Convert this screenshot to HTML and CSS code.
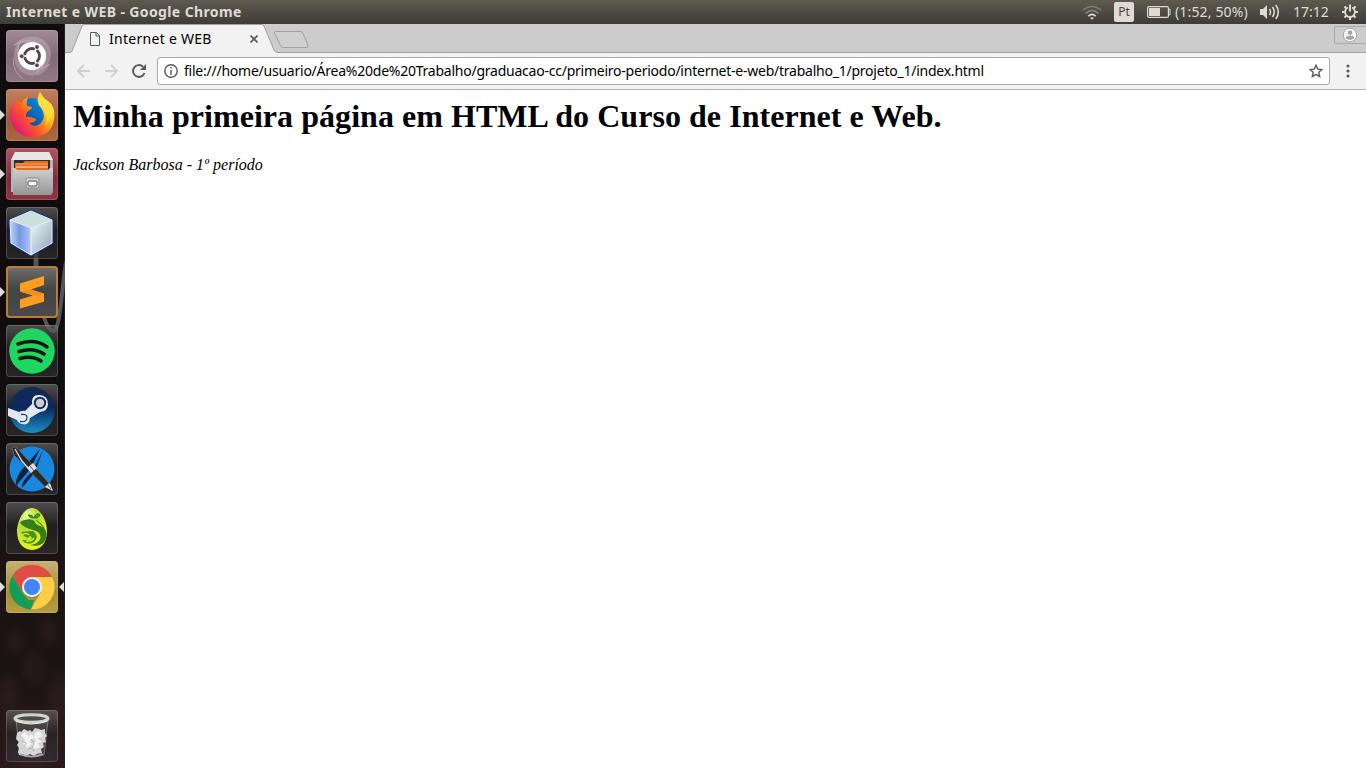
FILE: index.html
```html
<!DOCTYPE html>
<html lang="pt">
<head>
<meta charset="utf-8">
<title>Internet e WEB</title>
<link rel="stylesheet" href="styles.css">
</head>
<body>
<header class="panel">
  <div class="panel-title"><span class="t-title">Internet e WEB - Google Chrome</span></div>
  <div class="indicators">
    <svg class="ind-wifi" width="20" height="16" viewBox="0 0 20 16" fill="none" stroke-width="1.5"><path d="M.8 5.500Q10-2.500 19.200 5.500" stroke="#7d7a72"/><path d="M3.600 8.500Q10 2.500 16.400 8.500" stroke="#8f8c84"/><path d="M6.200 11.200Q10 7.500 13.800 11.200" stroke="#dfdbd2"/><path d="M8 12.800Q10 11.500 12 12.800L10 14.800z" fill="#dfdbd2"/></svg>
    <span class="ind-lang">Pt</span>
    <svg class="ind-batt" width="24" height="12" viewBox="0 0 24 12"><rect x=".6" y=".6" width="20.800" height="10.800" rx="1.500" fill="none" stroke="#dfdbd2" stroke-width="1.200"/><rect x="2" y="2" width="11" height="8" fill="#dfdbd2"/><path d="M22 3.200h1v5.600h-1" fill="none" stroke="#dfdbd2"/></svg>
    <span class="t-batt">(1:52, 50%)</span>
    <svg class="ind-vol" width="21" height="16" viewBox="0 0 21 16" fill="none" stroke="#dfdbd2" stroke-width="1.500"><path d="M0 5h3l4-4v14l-4-4H0z" fill="#dfdbd2" stroke="none"/><path d="M9.500 5q2 3 0 6M12.500 3q3.500 5 0 10M15.800 1q5 7 0 14"/></svg>
    <span class="t-clock">17:12</span>
    <svg class="ind-gear" width="16" height="16" viewBox="0 0 16 16" fill="none" stroke="#dfdbd2"><path d="M5.800 3.500A5 5 0 1 0 10.200 3.500" stroke-width="1.800"/><path d="M8 .5v7" stroke-width="2"/><path d="M0 8h3M13 8h3M2.500 2.500l2 2M13.500 2.500l-2 2M2.500 13.500l2-2M13.500 13.500l-2-2M8 13v3" stroke-width="2.200"/></svg>
  </div>
</header>
<div class="desktop">
  <nav class="launcher">
    <svg class="wall" width="65" height="744" viewBox="0 0 65 744"><path d="M36 228v16" stroke="#56545a" stroke-width="5"/><path d="M66 238C62 262 60 306 54 307Q46 306 42 284" fill="none" stroke="#56545a" stroke-width="4"/><g class="crowd"><ellipse cx="15" cy="618" rx="10" ry="13"/><ellipse cx="49" cy="608" rx="10" ry="15"/><ellipse cx="34" cy="643" rx="12" ry="17"/><ellipse cx="9" cy="671" rx="10" ry="20"/><ellipse cx="59" cy="673" rx="11" ry="26"/><ellipse cx="32" cy="715" rx="26" ry="30"/></g></svg>

    <div class="tile dash"><svg viewBox="0 0 52 52"><path d="M8 15Q20 2 36 9Q48 17 44 30Q41 40 30 43Q42 34 39 21Q34 8 8 15zM44 34Q37 48 22 45Q9 41 8 28Q7 18 14 11Q10 24 16 34Q26 46 44 34z" fill="#ccbdc4" opacity=".38"/><g fill="none" stroke="#d9ced3" stroke-width=".8" opacity=".6"><path d="M8 15Q28 4 39 21Q43 33 30 43M44 34Q24 47 14 31Q8 20 16 10M17 49Q7 42 7 28"/></g><circle cx="26" cy="26" r="14" fill="#fff"/><circle cx="26" cy="26" r="7.500" fill="none" stroke="#544149" stroke-width="2.800"/><path d="M26 26L13 26M26 26L33 14M26 26L33 38" stroke="#fff" stroke-width="1.700"/><circle cx="26" cy="26" r="5.500" fill="#fff"/><g fill="#544149" stroke="#fff" stroke-width=".7"><circle cx="15.700" cy="26.300" r="2.300"/><circle cx="31" cy="17" r="2.300"/><circle cx="31" cy="35.300" r="2.300"/></g></svg></div>

    <div class="tile firefox running"><svg viewBox="0 0 52 52"><defs><linearGradient id="ff" x1=".9" y1=".1" x2=".1" y2=".75"><stop stop-color="#fff44f"/><stop offset=".35" stop-color="#ffb319"/><stop offset=".65" stop-color="#ff5a24"/><stop offset="1" stop-color="#e51b70"/></linearGradient><linearGradient id="fb" x1="1" x2="0" y2="1"><stop stop-color="#0a9be8"/><stop offset=".5" stop-color="#0866bd"/><stop offset="1" stop-color="#1e2e85"/></linearGradient></defs><circle cx="26" cy="24" r="15" fill="url(#fb)"/><path d="M10 8Q11 13 15 14Q18 10 22 8Q20 13 21 17L26 18Q26 20 22 22L20 25L20 28Q23 27 27 29L30 30Q29 34 23 34Q29 40 35 34Q40 28 36 20Q28 13 34 3Q36 9 42 12Q49 17 48.500 28Q46 48 26 48.500Q9 47 4.500 31Q2 20 7 14L9 16z" fill="url(#ff)"/><path d="M34 3Q29 13 36 20Q43 28 39 37Q47 30 46 20Q44 13 38 9z" fill="#ffe141" opacity=".8"/></svg></div>

    <div class="tile files running"><svg viewBox="0 0 52 52"><defs><linearGradient id="cab" x2="0" y2="1"><stop stop-color="#d0d0d0"/><stop offset="1" stop-color="#969696"/></linearGradient></defs><path d="M9 4h34l4 8v32H5V12z" fill="#b5b5b5"/><path d="M9 4h34l4 8H5z" fill="#e6e6e6"/><path d="M8 12h36v12H8z" fill="#303030"/><path d="M9 15h8l2-2h23v10H9z" fill="#e46a22"/><path d="M10 16h32" stroke="#f5a660"/><path d="M10 19h32" stroke="#ffe9c5"/><path d="M7 20h2l2 2h31l2-2h3v24l-2 3H7z" fill="url(#cab)"/><rect x="20" y="30" width="13" height="10" rx="2" fill="#ddd" stroke="#8b8b8b"/><rect x="22" y="33" width="9" height="5" rx="1" fill="#fff" stroke="#444"/></svg></div>

    <div class="tile"><svg viewBox="0 0 52 52"><defs><linearGradient id="cl"><stop stop-color="#bcd3fa"/><stop offset=".45" stop-color="#7896e2"/><stop offset="1" stop-color="#acc6ff"/></linearGradient><linearGradient id="cr" x2="1" y2="1"><stop stop-color="#eefaff"/><stop offset="1" stop-color="#8f9fad"/></linearGradient></defs><path d="M25 4L46 13 46 36 25 48 5 36 4 13z" fill="#dcecff" stroke="#1c348b" stroke-width="2.500" stroke-linejoin="round"/><g stroke="#dcecff" stroke-linejoin="round"><path d="M25 4L46 13 25 21 4 13z" fill="#cddfdb"/><path d="M4 13L25 21V48L5 36z" fill="url(#cl)"/><path d="M25 21L46 13 46 36 25 48z" fill="url(#cr)"/></g></svg></div>

    <div class="tile sublime running"><svg viewBox="0 0 52 52"><path d="M14 17.500L38 10v9l-13 4.500 13 4v8.300L14 42.500v-9l13-4-13-4z" fill="#ff9d20"/><path d="M14 25.500L27 29.500 38 28 25 23.500z" fill="#f28e19"/></svg></div>

    <div class="tile"><svg viewBox="0 0 52 52"><circle cx="26" cy="26" r="22.800" fill="#1ed760"/><path d="M12 19Q29 13 41 22M13 26.500Q27 22 38 29M14 33.500Q26 30 35 36" fill="none" stroke="#151515" stroke-linecap="round" stroke-width="3.500"/></svg></div>

    <div class="tile"><svg viewBox="0 0 52 52"><defs><linearGradient id="st" x2="0" y2="1"><stop stop-color="#142b50"/><stop offset=".45" stop-color="#0b285e"/><stop offset="1" stop-color="#198fc5"/></linearGradient></defs><circle cx="26" cy="26" r="23" fill="url(#st)"/><path d="M2 24L13 28Q17 26 19 27L26 20Q25 10 34 11Q42 12 42 20Q42 27 34 28L24 34Q23 42 16 40Q12 39 11 36L2 32z" fill="#e4e7ec"/><circle cx="34" cy="19" r="6.200" fill="#162e58"/><circle cx="34" cy="19" r="4.200" fill="#c9ced7"/><path d="M15 30.500q6-1 6 3 0 5-7 4" fill="none" stroke="#174780" stroke-width="1.300"/></svg></div>

    <div class="tile"><svg viewBox="0 0 52 52"><circle cx="26" cy="26" r="22.500" fill="#1787df"/><path d="M34 6L19 23Q9 33 10 43L25 25zM37 7L26 29Q15 38 16 45L29 29z" fill="#09233e"/><path d="M6 5Q9 2 13 7L43 40 39 44 8 12z" fill="#29292c" stroke="#777" stroke-width=".7"/><path d="M21 25l6-5 4 5-6 5zM39 44l5-4 3 8z" fill="#ddd"/><path d="M9 6L16 18 23 26" fill="none" stroke="#ddd" stroke-width="1.300"/><path d="M24 23l4 5M42 42l3 4" stroke="#666"/></svg></div>

    <div class="tile"><svg viewBox="0 0 52 52"><defs><radialGradient id="egg" cx=".35" cy=".2" r=".9"><stop stop-color="#efffa5"/><stop offset=".35" stop-color="#b6de32"/><stop offset="1" stop-color="#f5f51b"/></radialGradient></defs><path d="M26 6C18 6 11 18 11 30Q12 47 26 48Q40 47 41 30C41 18 34 6 26 6z" fill="url(#egg)"/><path d="M14 20C20 17 26 16 29 20C30 25 37 22 40 29C42 40 35 46 24 43C33 42 37 36 33 31C29 27 21 28 15 22z" fill="#367d1c"/><path d="M15 30L27 29Q34 35 28 40Q21 44 16 38L20 38Q24 40 26 36Q24 32 22 36L18 34z" fill="#45911e"/><path d="M16 33q5-3 7 0M20 39q5 1 8-3" fill="none" stroke="#ccec2a" stroke-width="1.500"/><path d="M22 13q4-1 6 3 1-5 6-4-1 5-6 4-4 1-6-3zM30 18q5 3 8 8" fill="#459e22" stroke="#2c6a19" stroke-width=".7"/></svg></div>

    <div class="tile chrome running active"><svg viewBox="0 0 52 52"><path d="M6.500 14.700L16 31 25 48.300A22.200 22.200 0 0 1 6.500 14.700z" fill="#129d58"/><path d="M16 31l6 8h6l-3 9.300z" fill="#129d58"/><path d="M35 31L25 48.300A22.200 22.200 0 0 0 46 16H26z" fill="#ffce44"/><path d="M6.500 14.700L16 31Q17 16 26 16H46Q39 3.800 26 3.800T6.500 14.700z" fill="#df4d45"/><circle cx="26" cy="26" r="10" fill="#f3f3f3"/><circle cx="26" cy="26" r="8" fill="#4285f4"/></svg></div>

    <div class="tile trash"><svg viewBox="0 0 52 52"><path d="M10 10l4 35q12 4 24 0l4-35" fill="#ddd" fill-opacity=".1" stroke="#858585" stroke-width=".8"/><path d="M11 23l3-2 1 1 3-3 4 2 2-1 2 2 3-4 4 1 2 1 4-1v4l2 3-2 2 1 4-3 1 1 4-3 2 1 4-5 1-3 2-4-2-4 2-3-2-4 1-1-3 1-4-2-3 2-3-3-3z" fill="#d5d5d5"/><path d="M15 25l4-3 3 4 4-2 2 4-5 3 3 3-5 4-4-4 2-4zM29 23l5-2 2 5-3 2 3 4-4 1 2 4-5 2-3-4 4-4-2-3z" fill="#f2f2f2"/><path d="M16 31l4 2-2 4M25 29l3 4-2 5M32 28l3 2M21 40l4-2 3 3" fill="none" stroke="#aaa" stroke-width=".8"/><ellipse cx="25.500" cy="8.500" rx="16.500" ry="3.700" fill="#4c4c4c" stroke="#d2d2cd" stroke-width="3"/><path d="M10 11q15 6 31 0" fill="none" stroke="#eee"/><path d="M14 44q11 5 23 0" fill="none" stroke="#aaa" stroke-width="1.500"/></svg></div>
  </nav>

  <main class="browser">
    <div class="tabstrip">
      <svg class="tab-shape" width="260" height="29" viewBox="0 0 260 29"><path d="M0 28.500H5Q6.500 28.500 7 27L17 2Q18 .5 20 .5H196Q198 .5 199 2L209 26Q210 28.500 213 28.500H260V29H0z" fill="#f2f2f2" stroke="none"/><path d="M0 28.500H5Q6.500 28.500 7 27L17 2Q18 .5 20 .5H196Q198 .5 199 2L209 26Q210 28.500 213 28.500H260" fill="none" stroke="#a0a0a0"/><path d="M210.500 7.500H235Q237 7.500 237.800 9L243 21.500Q243.500 23.500 241.500 23.500H218.500Q216.500 23.500 215.800 22L209.500 9Q209 7.500 210.500 7.500z" fill="#d0d0d0" stroke="#a0a0a0"/></svg>
      <div class="tab">
        <svg width="10" height="14" viewBox="0 0 10 14" fill="none" stroke="#5a5a5a"><path d="M.5.500h5.800l3.200 3.200v9.800h-9zM6 .5v3.500h3.500"/></svg>
        <span class="t-tab">Internet e WEB</span>
        <svg class="close" width="8" height="8" viewBox="0 0 8 8"><path d="M.5.500l7 7M7.500.500l-7 7" stroke="#5a5a5a" stroke-width="1.600"/></svg>
      </div>
      <div class="avatar"><svg width="14" height="14" viewBox="0 0 14 14"><circle cx="7" cy="7" r="6.700" fill="#fff" stroke="#8a8a8a" stroke-width=".7"/><circle cx="7" cy="4.700" r="1.900" fill="#aaa" stroke="#777" stroke-width=".5"/><path d="M3 10q0-2 4-2t4 2q-4 3-8 0z" fill="#aaa" stroke="#777" stroke-width=".5"/></svg></div>
    </div>
    <div class="toolbar">
      <svg class="arrow" width="15" height="14" viewBox="0 0 15 14" fill="none" stroke="#d0d0d0" stroke-width="2"><path d="M14 7H2M8 1L2 7l6 6"/></svg>
      <svg class="arrow" width="15" height="14" viewBox="0 0 15 14" fill="none" stroke="#d0d0d0" stroke-width="2"><path d="M1 7h12M7 1l6 6-6 6"/></svg>
      <svg class="reload" width="14" height="14" viewBox="0 0 14 14"><path d="M12.500 9A5.900 5.900 0 1 1 11 2.700" fill="none" stroke="#5a5a5a" stroke-width="2"/><path d="M14 0v6H8z" fill="#5a5a5a"/></svg>
      <div class="address">
        <svg width="14" height="14" viewBox="0 0 14 14"><circle cx="7" cy="7" r="6.200" fill="none" stroke="#5a5a5a" stroke-width="1.400"/><path d="M7 3v1.500M7 6v5" stroke="#5a5a5a" stroke-width="1.500"/></svg>
        <span class="t-url">file:///home/usuario/Área%20de%20Trabalho/graduacao-cc/primeiro-periodo/internet-e-web/trabalho_1/projeto_1/index.html</span>
        <svg class="star" width="14" height="14" viewBox="0 0 14 14"><path d="M7 1.200l1.800 3.900 4.200.4-3.200 2.800.9 4.300L7 10.400l-3.700 2.200.9-4.300L1 5.500l4.200-.4z" fill="none" stroke="#5a5a5a" stroke-width="1.400"/></svg>
      </div>
      <svg class="menu" width="4" height="14" viewBox="0 0 4 14" fill="#5a5a5a"><circle cx="2" cy="2" r="1.600"/><circle cx="2" cy="7" r="1.600"/><circle cx="2" cy="12" r="1.600"/></svg>
    </div>
    <article class="page">
      <h1>Minha primeira página em HTML do Curso de Internet e Web.</h1>
      <p><em>Jackson Barbosa - 1º período</em></p>
    </article>
  </main>
</div>
</body>
</html>
```
FILE: styles.css
```css
* { box-sizing: border-box; }
body { margin: 0; width: 1366px; height: 768px; overflow: hidden; font-family: "Noto Sans", "Open Sans", sans-serif; background: #fff; }
svg { display: block; flex: none; }
span { white-space: nowrap; }
.panel { height: 24px; display: flex; justify-content: space-between; align-items: center; padding: 0 8px 0 6px; color: #dfdbd2; background: linear-gradient(#5e5a50, #3d3c38); }
.panel-title { font-weight: 700; font-size: 14px; line-height: 24px; }
.t-title { letter-spacing: .38px; }
.indicators { display: flex; align-items: center; font-size: 14px; line-height: 24px; }
.ind-wifi { margin-right: 12px; margin-top: 2px; }
.ind-lang { width: 20px; height: 20px; margin-right: 13px; border-radius: 2px; background: #dfdbd2; color: #45433e; font-size: 12px; line-height: 20px; text-align: center; }
.ind-batt { margin-right: 4px; }
.t-batt { width: 73px; margin-right: 12px; letter-spacing: .15px; }
.ind-vol { margin-right: 12px; }
.t-clock { width: 36px; margin-right: 13px; }
.desktop { display: flex; height: 744px; }
.launcher { position: relative; width: 65px; padding: 6px 0 6px 6px; display: flex; flex-direction: column; gap: 7px; background: linear-gradient(#100b0d 0%, #110e10 60%, #1c1314 74%, #1b1213 86%, #2b191c 100%); border-right: 1px solid #242022; }
.wall { position: absolute; left: 0; top: 0; }
.crowd { fill: #654145; opacity: .14; filter: blur(4px); }
.tile { position: relative; width: 52px; height: 52px; flex: none; border-radius: 4px; background: linear-gradient(rgba(105,105,105,.7), rgba(40,38,40,.65) 45%, rgba(52,49,51,.65)); box-shadow: inset 0 0 0 1px rgba(220,220,220,.2); }
.tile > svg { width: 52px; height: 52px; }
.dash { background: linear-gradient(#a08c94, #826a74 50%, #927983); }
.firefox { background: linear-gradient(#c3815f, #9e5b39 60%, #ac693f); }
.files { background: linear-gradient(#b05463, #832636 60%, #903442); }
.sublime { background: linear-gradient(#707070, #444 45%, #4a4a4a); box-shadow: inset 0 0 0 2px #bd7c32; }
.chrome { background: linear-gradient(#c6b174, #a58d38 60%, #b69e40); }
.trash { margin-top: auto; }
.running::before { content: ""; position: absolute; left: -6px; top: 21px; border: 5px solid transparent; border-left-color: #ddd; border-right: 0; }
.active::after { content: ""; position: absolute; right: -6px; top: 21px; border: 5px solid transparent; border-right-color: #ddd; border-left: 0; }
.browser { flex: 1; display: flex; flex-direction: column; background: #fff; }
.tabstrip { position: relative; height: 29px; display: flex; justify-content: space-between; background: #ccc; border-bottom: 1px solid #a0a0a0; }
.tab-shape { position: absolute; left: 0; top: 0; }
.tab { position: relative; width: 193px; height: 29px; padding: 1px 0 0 25px; display: flex; align-items: center; color: #000; font-size: 14px; }
.t-tab { margin-left: 9px; line-height: 20px; letter-spacing: .28px; }
.close { margin-left: auto; }
.avatar { width: 32px; height: 18px; margin-top: 2px; border: 1px solid #aaa; border-right: 0; border-radius: 2px 0 0 2px; display: flex; align-items: center; justify-content: center; }
.avatar svg { margin-right: 2px; }
.toolbar { height: 37px; padding: 0 16px 0 11px; display: flex; align-items: center; background: #f2f2f2; border-bottom: 1px solid #b5b5b5; }
.arrow { margin-right: 13px; }
.reload { margin-right: 11px; }
.address { flex: 1; height: 28px; margin-right: 16px; border: 1px solid #a9a9a9; border-radius: 3px; background: #fff; display: flex; align-items: center; padding: 0 6px; font-size: 14px; color: #000; }
.t-url { margin-left: 6px; line-height: 20px; letter-spacing: -.237px; }
.star { margin-left: auto; }
.page { padding: 8px; font-family: "Liberation Serif", serif; color: #000; }
.page h1 { margin: 0 0 21px; font-size: 32px; line-height: 37px; letter-spacing: .045px; }
.page p { margin: 0; font-size: 16px; line-height: 18px; }
```
